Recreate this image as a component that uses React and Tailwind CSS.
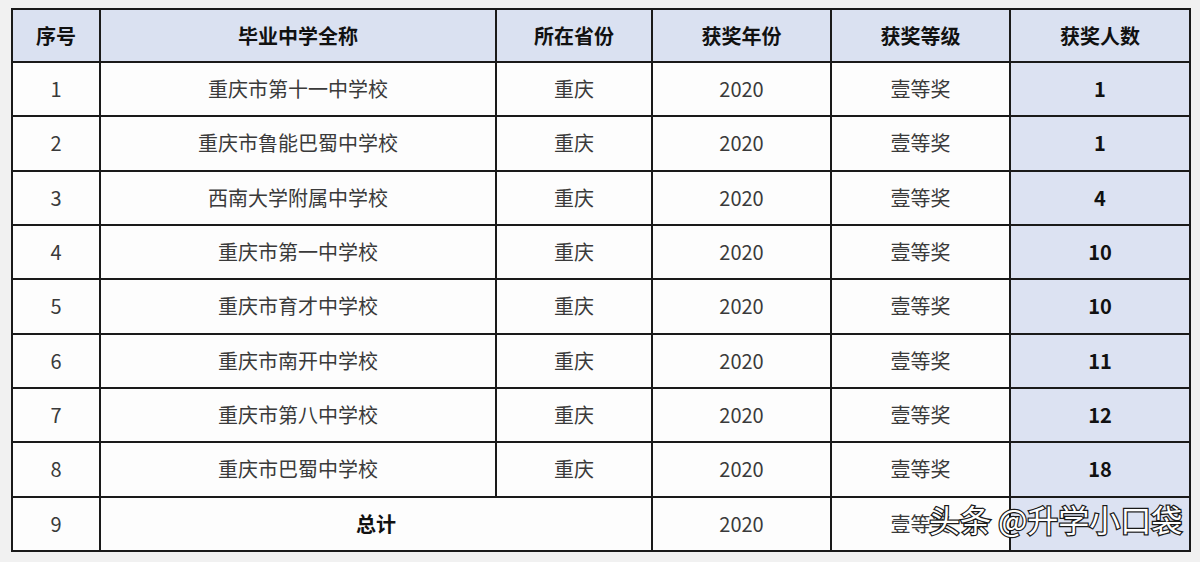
import React from "react";

const rows = [
  ["1", "重庆市第十一中学校", "1"],
  ["2", "重庆市鲁能巴蜀中学校", "1"],
  ["3", "西南大学附属中学校", "4"],
  ["4", "重庆市第一中学校", "10"],
  ["5", "重庆市育才中学校", "10"],
  ["6", "重庆市南开中学校", "11"],
  ["7", "重庆市第八中学校", "12"],
  ["8", "重庆市巴蜀中学校", "18"],
];

const headers = ["序号", "毕业中学全称", "所在省份", "获奖年份", "获奖等级", "获奖人数"];

export default function App() {
  return (
    <div
      className="w-[1200px] h-[562px] bg-[#f1f1f1] relative overflow-hidden pt-[8px] pl-[11px]"
      style={{ fontFamily: '"Noto Sans CJK SC", "Noto Sans", sans-serif' }}
    >
      <div className="w-[1180px] h-[544px] bg-[#1a1a1a] p-[2px] grid grid-cols-[86px_394px_154px_177px_177px_178px] grid-rows-[51px_repeat(9,1fr)] gap-[2px] text-[20px] text-[#3a3a3a]">
        {headers.map((h) => (
          <div key={h} className="bg-[#dae1f1] flex items-center justify-center font-bold text-[#111]">
            {h}
          </div>
        ))}
        {rows.map((r) => (
          <React.Fragment key={r[0]}>
            <div className="bg-[#fdfdfd] flex items-center justify-center">{r[0]}</div>
            <div className="bg-[#fdfdfd] flex items-center justify-center">{r[1]}</div>
            <div className="bg-[#fdfdfd] flex items-center justify-center">重庆</div>
            <div className="bg-[#fdfdfd] flex items-center justify-center">2020</div>
            <div className="bg-[#fdfdfd] flex items-center justify-center">壹等奖</div>
            <div className="bg-[#dce2f2] flex items-center justify-center font-bold text-[#111]">{r[2]}</div>
          </React.Fragment>
        ))}
        <div className="bg-[#fdfdfd] flex items-center justify-center">9</div>
        <div className="bg-[#fdfdfd] col-span-2 flex items-center justify-center font-bold text-[#111]">总计</div>
        <div className="bg-[#fdfdfd] flex items-center justify-center">2020</div>
        <div className="bg-[#fdfdfd] flex items-center justify-center">壹等奖</div>
        <div className="bg-[#dce2f2]"></div>
      </div>
      <div className="absolute left-[929px] top-[503px] text-[31px] leading-none text-white font-normal [-webkit-text-stroke:2.5px_#1a1a1a] [paint-order:stroke_fill]">
        头条 @升学小口袋
      </div>
    </div>
  );
}
